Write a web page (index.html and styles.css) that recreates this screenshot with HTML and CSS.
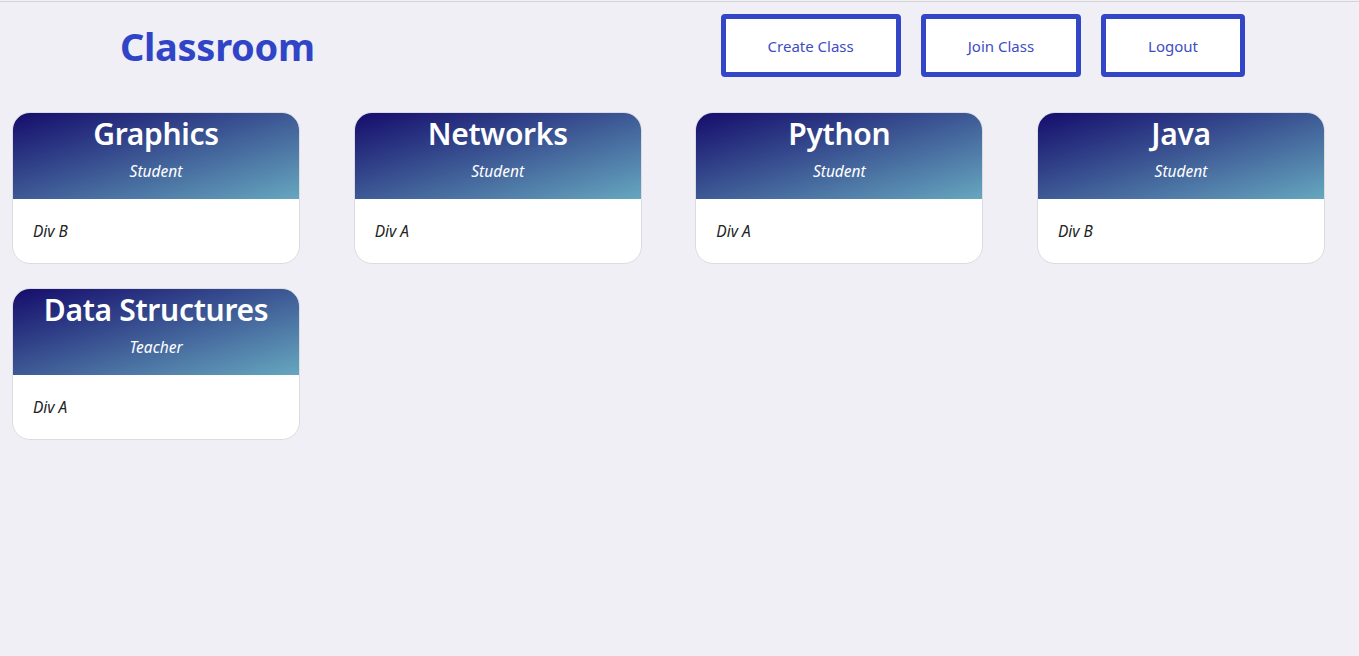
FILE: index.html
```html
<!DOCTYPE html>
<html>
<head>
<meta charset="utf-8">
<link rel="stylesheet" href="styles.css">
</head>
<body>
<div class="topline"></div>
<header class="header">
  <h1 class="brand">Classroom</h1>
  <nav class="actions">
    <button class="btn">Create Class</button>
    <button class="btn">Join Class</button>
    <button class="btn">Logout</button>
  </nav>
</header>
<main class="grid">
  <div class="card">
    <div class="card-head"><h2 class="card-title">Graphics</h2><div class="card-role">Student</div></div>
    <div class="card-body">Div B</div>
  </div>
  <div class="card">
    <div class="card-head"><h2 class="card-title">Networks</h2><div class="card-role">Student</div></div>
    <div class="card-body">Div A</div>
  </div>
  <div class="card">
    <div class="card-head"><h2 class="card-title">Python</h2><div class="card-role">Student</div></div>
    <div class="card-body">Div A</div>
  </div>
  <div class="card">
    <div class="card-head"><h2 class="card-title">Java</h2><div class="card-role">Student</div></div>
    <div class="card-body">Div B</div>
  </div>
  <div class="card">
    <div class="card-head"><h2 class="card-title">Data Structures</h2><div class="card-role">Teacher</div></div>
    <div class="card-body">Div A</div>
  </div>
</main>
</body>
</html>
```
FILE: styles.css
```css
html, body {
  margin: 0;
  padding: 0;
}
body {
  background: #f0eff5;
  font-family: "Noto Sans", "Open Sans", sans-serif;
  padding-top: 1px;
}
.topline {
  height: 1px;
  background: #d4d4d6;
}
.header {
  display: flex;
  align-items: center;
  justify-content: space-between;
  padding: 12px 114px 0 120px;
  height: 63px;
}
.brand {
  margin: 0;
  font-size: 38px;
  font-weight: 700;
  color: #3044c8;
  line-height: 1;
  letter-spacing: -0.3px;
}
.actions {
  display: flex;
  gap: 20px;
}
.btn {
  height: 63px;
  box-sizing: border-box;
  border: 5px solid #3346c8;
  border-radius: 4px;
  background: #fff;
  color: #3d4cc4;
  font-family: "Noto Sans", "Open Sans", sans-serif;
  font-size: 15px;
  font-weight: 400;
  padding: 0 42px;
}
.grid {
  display: grid;
  grid-template-columns: repeat(4, 288px);
  column-gap: 53.67px;
  row-gap: 24px;
  padding: 0 12px;
  margin-top: 35px;
}
.card {
  background: #fff;
  border: 1px solid #dcdce0;
  border-radius: 18px;
  overflow: hidden;
}
.card-head {
  height: 86px;
  box-sizing: border-box;
  background: linear-gradient(to bottom right, #150c6c, #66a7bf);
  color: #fff;
  text-align: center;
  padding-top: 2px;
}
.card-title {
  margin: 0;
  font-size: 30px;
  font-weight: 600;
  line-height: 38px;
  letter-spacing: -0.3px;
}
.card-role {
  font-size: 15.5px;
  font-style: italic;
  margin-top: 8px;
  line-height: 20px;
}
.card-body {
  height: 64px;
  box-sizing: border-box;
  padding: 22px 20px 0;
  font-size: 15.5px;
  font-style: italic;
  color: #222;
  line-height: 20px;
}
```
